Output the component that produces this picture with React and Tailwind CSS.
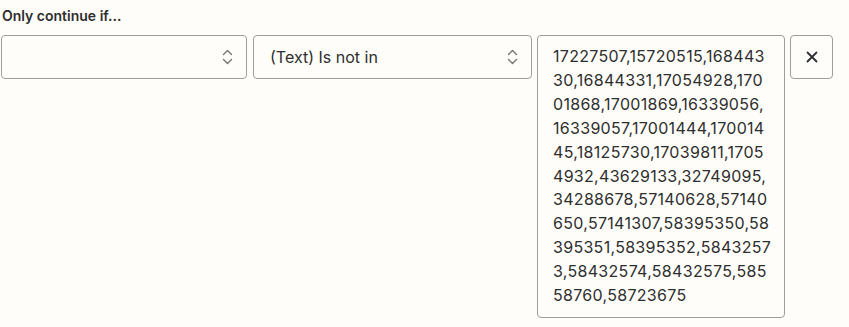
import React from "react";

function Chevrons() {
  return (
    <svg width="11" height="16" viewBox="0 0 11 16" fill="none" stroke="#77756f" strokeWidth="1.4" strokeLinecap="round" strokeLinejoin="round">
      <path d="M1.5 5.5 L5.5 1.5 L9.5 5.5" />
      <path d="M1.5 10.5 L5.5 14.5 L9.5 10.5" />
    </svg>
  );
}

const lines = [
  "17227507,15720515,168443",
  "30,16844331,17054928,170",
  "01868,17001869,16339056,",
  "16339057,17001444,170014",
  "45,18125730,17039811,1705",
  "4932,43629133,32749095,",
  "34288678,57140628,57140",
  "650,57141307,58395350,58",
  "395351,58395352,5843257",
  "3,58432574,58432575,585",
  "58760,58723675",
];

export default function App() {
  return (
    <div className="w-[849px] h-[327px] bg-[#fffdf9] text-[#2d2e2e] px-[1px] pt-[8px]" style={{ fontFamily: "Inter, 'Noto Sans', sans-serif" }}>
      <div className="text-[14px] leading-[16px] font-semibold pl-[1px] h-[27px]">Only continue if...</div>
      <div className="flex items-start">
        <div className="w-[246px] h-[44px] border border-[#a09e99] rounded-[4px] flex items-center justify-end pr-[13px]">
          <Chevrons />
        </div>
        <div className="ml-[6px] w-[279px] h-[44px] border border-[#a09e99] rounded-[4px] flex items-center justify-between pl-[16px] pr-[13px] text-[16px]">
          <span>(Text) Is not in</span>
          <Chevrons />
        </div>
        <div className="ml-[5px] w-[248px] border border-[#a09e99] rounded-[4px] px-[15px] py-[9px] text-[16px] leading-[23.9px] tracking-[0.3px]">
          {lines.map((l, i) => (
            <div key={i} className="whitespace-nowrap">{l}</div>
          ))}
        </div>
        <div className="ml-[5px] w-[43px] h-[44px] border border-[#a09e99] rounded-[4px] flex items-center justify-center">
          <svg width="14" height="14" viewBox="0 0 14 14" stroke="#2d2e2e" strokeWidth="1.8" strokeLinecap="round">
            <path d="M2.5 2.5 L11.5 11.5 M11.5 2.5 L2.5 11.5" />
          </svg>
        </div>
      </div>
    </div>
  );
}
